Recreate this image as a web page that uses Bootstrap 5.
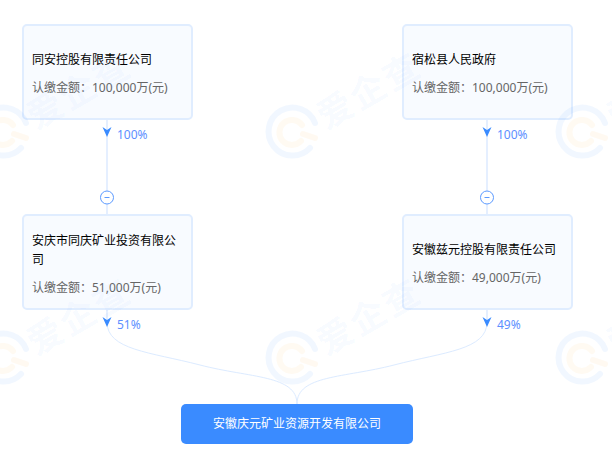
<!DOCTYPE html>
<html lang="zh"><head><meta charset="utf-8"><title>股权结构</title>
<link href="https://cdn.jsdelivr.net/npm/bootstrap@5.3.0/dist/css/bootstrap.min.css" rel="stylesheet">
<style>
html,body{width:612px;height:461px;overflow:hidden;background:#fff;}
body{font-family:"Noto Sans","Noto Sans CJK SC",sans-serif;font-size:12px;}
.stage{position:relative;width:612px;height:461px;padding:24px 39px 0 22px;overflow:hidden;}
.wm-layer,.links{position:absolute;left:0;top:0;width:612px;height:461px;pointer-events:none;}
.wm-text{position:absolute;font-size:35px;line-height:36px;font-weight:700;letter-spacing:3px;color:rgba(58,139,255,.055);transform:rotate(-30deg);white-space:nowrap;}
.holder{position:relative;width:171px;height:96px;border:2px solid #e0edff;border-radius:5px;background:#f8fbff;padding:3px 8px 0;color:#000;line-height:19px;}
.holder p{margin:0;}
.amount{color:#666;margin-top:9px!important;}
.tier-gap{margin-top:94px;}
.pct{position:absolute;color:#5d8fff;line-height:14px;}
.root-node{position:absolute;left:181px;top:404px;width:232px;height:40px;background:#3a8bff;color:#fff;border-radius:5px;line-height:40px;font-size:12px;}
</style></head><body>
<div class="stage">
<svg class="links" viewBox="0 0 612 461" aria-hidden="true" fill="none">
<path d="M107 120V214M487 120V214" stroke="#e5efff" stroke-width="2"/>
<path d="M107 322C107 350 150 352 200 365S297 375 297 404M487 322C487 350 444 352 394 365S297 375 297 404" stroke="#dcebff" stroke-width="1"/>
<path d="M107 310V322M487 310V322" stroke="#e5efff" stroke-width="2"/>
<g fill="#3a8bff"><path d="M102.500 127 107 130 111.500 127 107 137Z"/><path d="M482.500 127 487 130 491.500 127 487 137Z"/><path d="M102.500 317 107 320 111.500 317 107 327Z"/><path d="M482.500 317 487 320 491.500 317 487 327Z"/></g>
<g fill="#fff" stroke="#5d9bff"><circle cx="107" cy="197.500" r="6.500"/><circle cx="487" cy="197.500" r="6.500"/></g>
<path d="M104.500 197.500h5M484.500 197.500h5" stroke="#5d9bff"/>
</svg>
<div class="d-flex justify-content-between position-relative">
<div>
<div class="holder d-flex flex-column justify-content-center"><p>同安控股有限责任公司</p><p class="amount">认缴金额：100,000万(元)</p></div>
<div class="holder tier-gap d-flex flex-column justify-content-center"><p>安庆市同庆矿业投资有限公司</p><p class="amount">认缴金额：51,000万(元)</p></div>
</div>
<div>
<div class="holder d-flex flex-column justify-content-center"><p>宿松县人民政府</p><p class="amount">认缴金额：100,000万(元)</p></div>
<div class="holder tier-gap d-flex flex-column justify-content-center"><p>安徽兹元控股有限责任公司</p><p class="amount">认缴金额：49,000万(元)</p></div>
</div>
</div>
<span class="pct" style="left:117px;top:128px">100%</span><span class="pct" style="left:497px;top:128px">100%</span>
<span class="pct" style="left:117px;top:318px">51%</span><span class="pct" style="left:497px;top:318px">49%</span>
<div class="root-node text-center">安徽庆元矿业资源开发有限公司</div>
<svg class="wm-layer" viewBox="0 0 612 461" aria-hidden="true">
<defs><g id="wmlogo" fill="none" stroke-linecap="round"><path d="M23 -9A24 24 0 1 0 18 16" stroke="#3a8bff" stroke-opacity=".07" stroke-width="6"/><path d="M10 -7A12.500 12.500 0 1 0 9 9" stroke="#ffb84d" stroke-opacity=".07" stroke-width="6"/><path d="M11 2 23 6" stroke="#ffb84d" stroke-opacity=".08" stroke-width="6"/></g></defs>
<use href="#wmlogo" x="3" y="132"/><use href="#wmlogo" x="292" y="132"/><use href="#wmlogo" x="582" y="132"/>
<use href="#wmlogo" x="3" y="358"/><use href="#wmlogo" x="292" y="358"/><use href="#wmlogo" x="582" y="358"/>
</svg>
<div class="wm-layer">
<span class="wm-text" style="left:22px;top:72px">爱企查</span><span class="wm-text" style="left:312px;top:72px">爱企查</span><span class="wm-text" style="left:602px;top:72px">爱企查</span>
<span class="wm-text" style="left:22px;top:298px">爱企查</span><span class="wm-text" style="left:312px;top:298px">爱企查</span><span class="wm-text" style="left:602px;top:298px">爱企查</span>
</div>
</div>
</body></html>
